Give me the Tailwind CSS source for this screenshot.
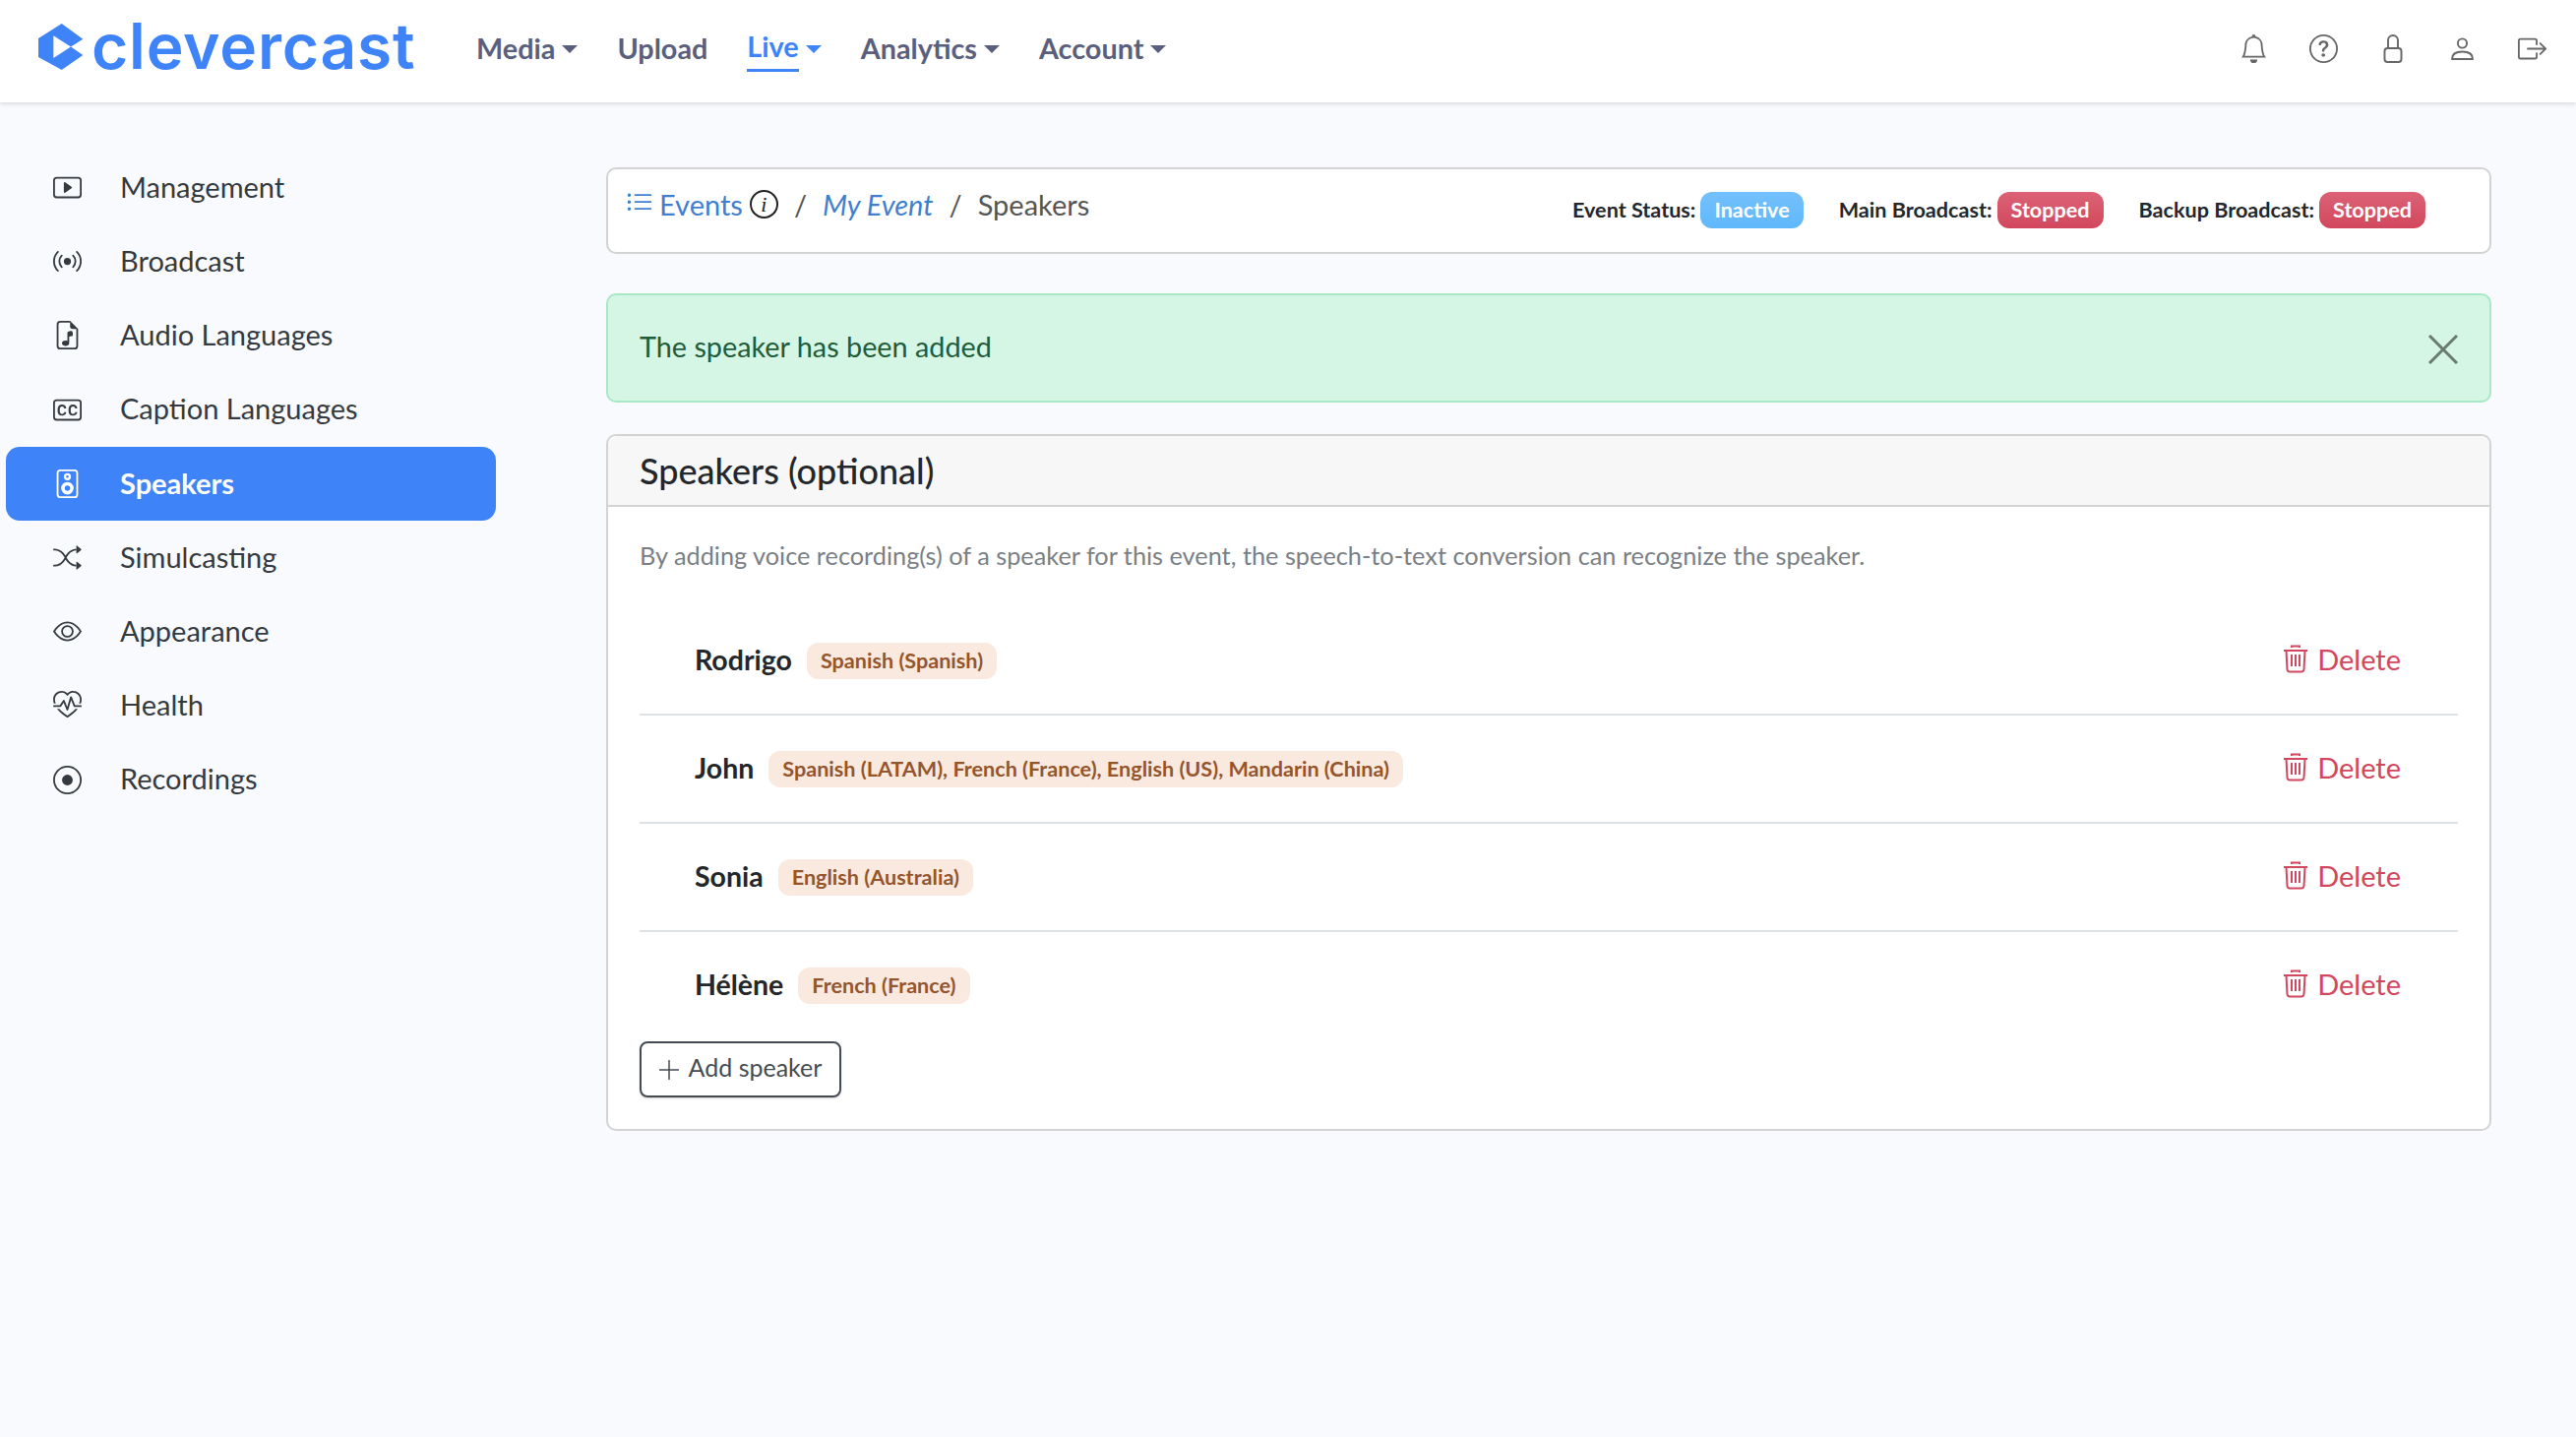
<!DOCTYPE html>
<html lang="en">
<head>
  <meta charset="UTF-8" />
  <title>Speakers</title>
  <script src="https://cdn.jsdelivr.net/npm/@tailwindcss/browser@4"></script>
</head>
<body class="bg-[#f9fafe] text-[#2f3640] min-h-screen font-['Lato',sans-serif]">

  <!-- Top bar -->
  <header class="h-[104px] bg-white shadow-[0_2px_4px_rgba(0,0,0,0.12)] flex items-center relative">
    <a class="flex items-center ml-[39px] w-[399px] -mt-[9px] text-[#3f83f8]">
      <svg class="w-[46px] h-[47px] shrink-0" viewBox="0 0 46 47" fill="#3f83f8"><path d="M23.7 0 L45.3 15.7 L33 23.5 L45.3 32 L23.7 47 L0 34 L0 15 Z"/><path d="M15.3 12.3 L33 23.5 L15.3 35Z" fill="#fff"/></svg>
      <span class="ml-[8px] -mt-[2px] text-[64px] leading-none font-semibold tracking-[0.8px] font-['Inter',sans-serif]">clevercast</span>
    </a>
    <nav class="flex items-center text-[28.8px] font-bold text-[#5a5f7d] ml-[46px] -mt-[5px]">
      <a class="flex items-center mr-[40px]">Media<span class="ml-[7px] w-0 h-0 border-x-[8px] border-x-transparent border-t-[8px] border-t-[#5a5f7d]"></span></a>
      <a class="mr-[40px]">Upload</a>
      <a class="flex items-center mr-[40px] text-[#3f83f8]"><span class="border-b-[3px] border-[#3f83f8]">Live</span><span class="ml-[7px] w-0 h-0 border-x-[8px] border-x-transparent border-t-[8px] border-t-[#3f83f8]"></span></a>
      <a class="flex items-center mr-[40px]">Analytics<span class="ml-[7px] w-0 h-0 border-x-[8px] border-x-transparent border-t-[8px] border-t-[#5a5f7d]"></span></a>
      <a class="flex items-center">Account<span class="ml-[7px] w-0 h-0 border-x-[8px] border-x-transparent border-t-[8px] border-t-[#5a5f7d]"></span></a>
    </nav>
    <div class="ml-auto mr-[30px] -mt-[6px] flex items-center gap-[41.7px] text-[#666]">
      <svg class="w-[29px] h-[29px]" viewBox="0 0 16 16" fill="currentColor"><path d="M8 16a2 2 0 0 0 2-2H6a2 2 0 0 0 2 2zM8 1.918l-.797.161A4.002 4.002 0 0 0 4 6c0 .628-.134 2.197-.459 3.742-.16.767-.376 1.566-.663 2.258h10.244c-.287-.692-.502-1.49-.663-2.258C12.134 8.197 12 6.628 12 6a4.002 4.002 0 0 0-3.203-3.92L8 1.917zM14.22 12c.223.447.481.801.78 1H1c.299-.199.557-.553.78-1C2.68 10.2 3 6.88 3 6c0-2.42 1.72-4.44 4.005-4.901a1 1 0 1 1 1.99 0A5.002 5.002 0 0 1 13 6c0 .88.32 4.2 1.22 6z"/></svg>
      <svg class="w-[29px] h-[29px]" viewBox="0 0 16 16" fill="currentColor"><path d="M8 15A7 7 0 1 1 8 1a7 7 0 0 1 0 14zm0 1A8 8 0 1 0 8 0a8 8 0 0 0 0 16z"/><path d="M5.255 5.786a.237.237 0 0 0 .241.247h.825c.138 0 .248-.113.266-.25.09-.656.54-1.134 1.342-1.134.686 0 1.314.343 1.314 1.168 0 .635-.374.927-.965 1.371-.673.489-1.206 1.06-1.168 1.987l.003.217a.25.25 0 0 0 .25.246h.811a.25.25 0 0 0 .25-.25v-.105c0-.718.273-.927 1.01-1.486.609-.463 1.244-.977 1.244-2.056 0-1.511-1.276-2.241-2.673-2.241-1.267 0-2.655.59-2.75 2.286zm1.557 5.763c0 .533.425.927 1.01.927.609 0 1.028-.394 1.028-.927 0-.552-.42-.94-1.029-.94-.584 0-1.009.388-1.009.94z"/></svg>
      <svg class="w-[29px] h-[29px]" viewBox="0 0 29 29" fill="none" stroke="currentColor" stroke-width="1.9"><rect x="5.5" y="14" width="17" height="14" rx="3"/><path d="M9 14V6a5 5 0 0 1 10 0v8"/></svg>
      <svg class="w-[29px] h-[29px]" viewBox="0 0 29 29" fill="none" stroke="currentColor" stroke-width="1.9"><circle cx="14.5" cy="9" r="4.6"/><path d="M4 25q0-7.5 10.5-7.5T25 25z" stroke-linejoin="round"/></svg>
      <svg class="w-[29px] h-[29px]" viewBox="0 0 16 16" fill="currentColor"><path d="M10 12.5a.5.5 0 0 1-.5.5h-8a.5.5 0 0 1-.5-.5v-9a.5.5 0 0 1 .5-.5h8a.5.5 0 0 1 .5.5v2a.5.5 0 0 0 1 0v-2A1.5 1.5 0 0 0 9.5 2h-8A1.5 1.5 0 0 0 0 3.5v9A1.5 1.5 0 0 0 1.5 14h8a1.5 1.5 0 0 0 1.5-1.5v-2a.5.5 0 0 0-1 0v2z"/><path d="M15.854 8.354a.5.5 0 0 0 0-.708l-3-3a.5.5 0 0 0-.708.708L14.293 7.5H5.5a.5.5 0 0 0 0 1h8.793l-2.147 2.146a.5.5 0 0 0 .708.708l3-3z"/></svg>
    </div>
  </header>

  <div class="flex">
    <!-- Sidebar -->
    <aside class="w-[504px] ml-[6px] pt-[49px] shrink-0 text-[29px] text-[#343a40]">
      <a class="h-[75.2px] flex items-center pl-[48px]">
        <svg class="w-[29px] h-[29px] mr-[39px] shrink-0" viewBox="0 0 16 16" fill="currentColor"><path d="M6.79 5.093A.5.5 0 0 0 6 5.5v5a.5.5 0 0 0 .79.407l3.5-2.5a.5.5 0 0 0 0-.814l-3.5-2.5z"/><path d="M0 4a2 2 0 0 1 2-2h12a2 2 0 0 1 2 2v8a2 2 0 0 1-2 2H2a2 2 0 0 1-2-2V4zm15 0a1 1 0 0 0-1-1H2a1 1 0 0 0-1 1v8a1 1 0 0 0 1 1h12a1 1 0 0 0 1-1V4z"/></svg>
        <span class="-mt-[2px]">Management</span>
      </a>
      <a class="h-[75.2px] flex items-center pl-[48px]">
        <svg class="w-[29px] h-[29px] mr-[39px] shrink-0" viewBox="0 0 16 16" fill="currentColor"><path d="M3.05 3.05a7 7 0 0 0 0 9.9.5.5 0 0 1-.707.707 8 8 0 0 1 0-11.314.5.5 0 0 1 .707.707zm2.122 2.122a4 4 0 0 0 0 5.656.5.5 0 1 1-.708.708 5 5 0 0 1 0-7.072.5.5 0 0 1 .708.708zm5.656-.708a.5.5 0 0 1 .708 0 5 5 0 0 1 0 7.072.5.5 0 1 1-.708-.708 4 4 0 0 0 0-5.656.5.5 0 0 1 0-.708zm2.122-2.12a.5.5 0 0 1 .707 0 8 8 0 0 1 0 11.313.5.5 0 0 1-.707-.707 7 7 0 0 0 0-9.9.5.5 0 0 1 0-.706zM10 8a2 2 0 1 1-4 0 2 2 0 0 1 4 0z"/></svg>
        <span class="-mt-[2px]">Broadcast</span>
      </a>
      <a class="h-[75.2px] flex items-center pl-[48px]">
        <svg class="w-[29px] h-[29px] mr-[39px] shrink-0" viewBox="0 0 16 16" fill="currentColor"><path d="M11 6.64a1 1 0 0 0-1.243-.97l-1 .25A1 1 0 0 0 8 6.89v4.306A2.572 2.572 0 0 0 7 11c-.5 0-.974.134-1.338.377-.36.24-.662.628-.662 1.123s.301.883.662 1.123c.364.243.839.377 1.338.377.5 0 .974-.134 1.338-.377.36-.24.662-.628.662-1.123V8.89l2-.5V6.64z"/><path d="M14 14V4.5L9.5 0H4a2 2 0 0 0-2 2v12a2 2 0 0 0 2 2h8a2 2 0 0 0 2-2zM9.5 3A1.5 1.5 0 0 0 11 4.5h2V14a1 1 0 0 1-1 1H4a1 1 0 0 1-1-1V2a1 1 0 0 1 1-1h5.5v2z"/></svg>
        <span class="-mt-[2px]">Audio Languages</span>
      </a>
      <a class="h-[75.2px] flex items-center pl-[48px]">
        <svg class="w-[29px] h-[29px] mr-[39px] shrink-0" viewBox="0 0 16 16" fill="currentColor"><path d="M3.708 7.755c0-1.111.488-1.753 1.319-1.753.681 0 1.138.47 1.186 1.107H7.36V7c-.052-1.186-1.024-2-2.342-2C3.414 5 2.5 6.05 2.5 7.751v.747c0 1.7.905 2.73 2.518 2.73 1.314 0 2.285-.792 2.342-1.939v-.114H6.213c-.048.615-.496 1.05-1.186 1.05-.84 0-1.319-.62-1.319-1.727v-.743zm6.14 0c0-1.111.488-1.753 1.318-1.753.682 0 1.139.47 1.187 1.107H13.5V7c-.053-1.186-1.024-2-2.342-2C9.554 5 8.64 6.05 8.64 7.751v.747c0 1.7.905 2.73 2.518 2.73 1.314 0 2.285-.792 2.342-1.939v-.114h-1.147c-.048.615-.497 1.05-1.187 1.05-.839 0-1.318-.62-1.318-1.727v-.743z"/><path d="M14 3a1 1 0 0 1 1 1v8a1 1 0 0 1-1 1H2a1 1 0 0 1-1-1V4a1 1 0 0 1 1-1h12zM2 2a2 2 0 0 0-2 2v8a2 2 0 0 0 2 2h12a2 2 0 0 0 2-2V4a2 2 0 0 0-2-2H2z"/></svg>
        <span class="-mt-[2px]">Caption Languages</span>
      </a>
      <a class="h-[75.2px] flex items-center pl-[48px] bg-[#3f83f8] text-white font-bold rounded-[14px] w-[498px]">
        <svg class="w-[29px] h-[29px] mr-[39px] shrink-0" viewBox="0 0 16 16" fill="currentColor"><path d="M12 1a1 1 0 0 1 1 1v12a1 1 0 0 1-1 1H4a1 1 0 0 1-1-1V2a1 1 0 0 1 1-1h8zM4 0a2 2 0 0 0-2 2v12a2 2 0 0 0 2 2h8a2 2 0 0 0 2-2V2a2 2 0 0 0-2-2H4z"/><path d="M8 4.75a.75.75 0 1 1 0-1.5.75.75 0 0 1 0 1.5zM8 6a2 2 0 1 0 0-4 2 2 0 0 0 0 4zm0 3a1.5 1.5 0 1 0 0 3 1.5 1.5 0 0 0 0-3zm-3.5 1.5a3.5 3.5 0 1 1 7 0 3.5 3.5 0 0 1-7 0z"/></svg>
        <span class="-mt-[2px]">Speakers</span>
      </a>
      <a class="h-[75.2px] flex items-center pl-[48px]">
        <svg class="w-[29px] h-[29px] mr-[39px] shrink-0" viewBox="0 0 16 16" fill="currentColor"><path fill-rule="evenodd" d="M0 3.5A.5.5 0 0 1 .5 3H1c2.202 0 3.827 1.24 4.874 2.418.49.552.865 1.102 1.126 1.532.26-.43.636-.98 1.126-1.532C9.173 4.24 10.798 3 13 3v1c-1.798 0-3.173 1.01-4.126 2.082A9.624 9.624 0 0 0 7.556 8a9.624 9.624 0 0 0 1.317 1.918C9.828 10.99 11.204 12 13 12v1c-2.202 0-3.827-1.24-4.874-2.418A10.595 10.595 0 0 1 7 9.05c-.26.43-.636.98-1.126 1.532C4.827 11.76 3.202 13 1 13H.5a.5.5 0 0 1 0-1H1c1.798 0 3.173-1.01 4.126-2.082A9.624 9.624 0 0 0 6.444 8a9.624 9.624 0 0 0-1.317-1.918C4.172 5.01 2.796 4 1 4H.5a.5.5 0 0 1-.5-.5z"/><path d="M13 5.466V1.534a.25.25 0 0 1 .41-.192l2.36 1.966c.12.1.12.284 0 .384l-2.36 1.966a.25.25 0 0 1-.41-.192zm0 9v-3.932a.25.25 0 0 1 .41-.192l2.36 1.966c.12.1.12.284 0 .384l-2.36 1.966a.25.25 0 0 1-.41-.192z"/></svg>
        <span class="-mt-[2px]">Simulcasting</span>
      </a>
      <a class="h-[75.2px] flex items-center pl-[48px]">
        <svg class="w-[29px] h-[29px] mr-[39px] shrink-0" viewBox="0 0 16 16" fill="currentColor"><path d="M16 8s-3-5.5-8-5.5S0 8 0 8s3 5.5 8 5.5S16 8 16 8zM1.173 8a13.133 13.133 0 0 1 1.66-2.043C4.12 4.668 5.88 3.5 8 3.5c2.12 0 3.879 1.168 5.168 2.457A13.133 13.133 0 0 1 14.828 8c-.058.087-.122.183-.195.288-.335.48-.83 1.12-1.465 1.755C11.879 11.332 10.119 12.5 8 12.5c-2.12 0-3.879-1.168-5.168-2.457A13.134 13.134 0 0 1 1.172 8z"/><path d="M8 5.5a2.5 2.5 0 1 0 0 5 2.5 2.5 0 0 0 0-5zM4.5 8a3.5 3.5 0 1 1 7 0 3.5 3.5 0 0 1-7 0z"/></svg>
        <span class="-mt-[2px]">Appearance</span>
      </a>
      <a class="h-[75.2px] flex items-center pl-[48px]">
        <svg class="w-[29px] h-[29px] mr-[39px] shrink-0" viewBox="0 0 16 16" fill="currentColor"><path d="m8 2.748-.717-.737C5.6.281 2.514.878 1.4 3.053.918 3.995.78 5.323 1.508 7H.43c-2.128-5.697 4.165-8.83 7.394-5.857.06.055.119.112.176.171a3.12 3.12 0 0 1 .176-.17c3.23-2.974 9.522.159 7.394 5.856h-1.078c.728-1.677.59-3.005.108-3.947C13.486.878 10.4.28 8.717 2.01L8 2.748ZM2.212 10h1.315C4.593 11.183 6.05 12.458 8 13.795c1.949-1.337 3.407-2.612 4.473-3.795h1.315c-1.265 1.566-3.14 3.25-5.788 5-2.648-1.75-4.523-3.434-5.788-5Z"/><path d="M10.464 3.314a.5.5 0 0 0-.945.049L7.921 8.956 6.464 5.314a.5.5 0 0 0-.88-.091L3.732 8H.5a.5.5 0 0 0 0 1H4a.5.5 0 0 0 .416-.223l1.473-2.209 1.647 4.118a.5.5 0 0 0 .945-.049l1.598-5.593 1.457 3.642A.5.5 0 0 0 12 9h3.5a.5.5 0 0 0 0-1h-3.162l-1.874-4.686Z"/></svg>
        <span class="-mt-[2px]">Health</span>
      </a>
      <a class="h-[75.2px] flex items-center pl-[48px]">
        <svg class="w-[29px] h-[29px] mr-[39px] shrink-0" viewBox="0 0 16 16" fill="currentColor"><path d="M8 15A7 7 0 1 1 8 1a7 7 0 0 1 0 14zm0 1A8 8 0 1 0 8 0a8 8 0 0 0 0 16z"/><path d="M11 8a3 3 0 1 1-6 0 3 3 0 0 1 6 0z"/></svg>
        <span class="-mt-[2px]">Recordings</span>
      </a>
    </aside>

    <!-- Main -->
    <main class="ml-[106px] w-[1916px] pt-[66px]">
      <!-- Breadcrumb + status -->
      <div class="h-[88px] bg-white border-2 border-[#d3d3d3] rounded-[10px] flex items-start relative">
        <div class="flex items-center pl-[18px] pt-[14px] text-[29px]">
          <svg class="w-[28px] h-[28px] mr-[6px] -mt-[3px] text-[#3f7fcf]" viewBox="0 0 16 16" fill="currentColor"><path fill-rule="evenodd" d="M5 11.5a.5.5 0 0 1 .5-.5h9a.5.5 0 0 1 0 1h-9a.5.5 0 0 1-.5-.5zm0-4a.5.5 0 0 1 .5-.5h9a.5.5 0 0 1 0 1h-9a.5.5 0 0 1-.5-.5zm0-4a.5.5 0 0 1 .5-.5h9a.5.5 0 0 1 0 1h-9a.5.5 0 0 1-.5-.5zm-3 1a1 1 0 1 0 0-2 1 1 0 0 0 0 2zm0 4a1 1 0 1 0 0-2 1 1 0 0 0 0 2zm0 4a1 1 0 1 0 0-2 1 1 0 0 0 0 2z"/></svg>
          <a class="text-[#3f7fcf]">Events</a>
          <span class="ml-[7px] w-[29px] h-[29px] rounded-full border-2 border-[#222] flex items-center justify-center text-[22px] italic font-['Liberation_Serif',serif] text-[#222]">i</span>
          <span class="mx-[16px] text-[#555]">/</span>
          <a class="italic text-[#3f7fcf]">My Event</a>
          <span class="mx-[16px] text-[#555]">/</span>
          <span class="text-[#555]">Speakers</span>
        </div>
        <div class="absolute left-[980px] top-[23px] flex items-center text-[21.6px] font-bold text-[#23272b]">
          <span>Event Status:</span>
          <span class="ml-[5px] h-[37px] px-[14px] flex items-center rounded-[12px] text-white bg-gradient-to-b from-[#74c0fc] to-[#5fb8fb]">Inactive</span>
          <span class="ml-[36px]">Main Broadcast:</span>
          <span class="ml-[5px] h-[37px] px-[14px] flex items-center rounded-[12px] text-white bg-gradient-to-b from-[#dc6276] to-[#d1475d]">Stopped</span>
          <span class="ml-[36px]">Backup Broadcast:</span>
          <span class="ml-[5px] h-[37px] px-[14px] flex items-center rounded-[12px] text-white bg-gradient-to-b from-[#dc6276] to-[#d1475d]">Stopped</span>
        </div>
      </div>

      <!-- Alert -->
      <div class="mt-[40px] h-[111px] bg-[#d5f5e5] border-2 border-[#a9e8c6] rounded-[10px] flex items-center justify-between pl-[32px] pr-[32px] text-[28.8px] text-[#1f5c38]">
        <span class="-mt-[2px]">The speaker has been added</span>
        <svg class="w-[30px] h-[30px] mt-[2px] text-[#6a7a70]" viewBox="0 0 30 30" fill="none" stroke="currentColor" stroke-width="3"><path d="M1 1l28 28M29 1L1 29"/></svg>
      </div>

      <!-- Speakers card -->
      <section class="mt-[32px] bg-white border-2 border-[#d3d3d3] rounded-[10px]">
        <div class="h-[72px] bg-[#f7f7f7] border-b-2 border-[#d3d3d3] rounded-t-[10px] flex items-center pl-[32px] text-[36px] font-medium text-[#23272b]">Speakers (optional)</div>
        <div class="px-[32px] pt-[31px] pb-[32px]">
          <p class="text-[25.3px] leading-[36px] text-[#7a7f85]">By adding voice recording(s) of a speaker for this event, the speech-to-text conversion can recognize the speaker.</p>
          <ul class="mt-[35px]">
            <li class="h-[110px] pb-[2px] border-b-2 border-[#dee2e6] flex items-center pl-[56px] pr-[58px]">
              <span class="text-[28.5px] font-bold text-[#23272b]">Rodrigo</span>
              <span class="ml-[15px] mt-[3px] h-[37px] px-[14px] flex items-center rounded-[12px] bg-[#f9e9de] text-[#94552c] text-[21.6px] font-bold">Spanish (Spanish)</span>
              <a class="ml-auto flex items-center text-[#d1475d] text-[29px]">
                <svg class="w-[28px] h-[30px] mr-[8px] -mt-[2px]" viewBox="0 0 28 30" fill="none" stroke="currentColor" stroke-width="2"><path d="M2 7h24M4.5 7l1 19a2.5 2.5 0 0 0 2.5 2.5h12a2.5 2.5 0 0 0 2.5-2.5l1-19M10 4V2.5h8V4M10 11v12M14 11v12M18 11v12"/></svg>
                Delete
              </a>
            </li>
            <li class="h-[110px] pb-[2px] border-b-2 border-[#dee2e6] flex items-center pl-[56px] pr-[58px]">
              <span class="text-[28.5px] font-bold text-[#23272b]">John</span>
              <span class="ml-[15px] mt-[3px] h-[37px] px-[14px] flex items-center rounded-[12px] bg-[#f9e9de] text-[#94552c] text-[21.6px] font-bold">Spanish (LATAM), French (France), English (US), Mandarin (China)</span>
              <a class="ml-auto flex items-center text-[#d1475d] text-[29px]">
                <svg class="w-[28px] h-[30px] mr-[8px] -mt-[2px]" viewBox="0 0 28 30" fill="none" stroke="currentColor" stroke-width="2"><path d="M2 7h24M4.5 7l1 19a2.5 2.5 0 0 0 2.5 2.5h12a2.5 2.5 0 0 0 2.5-2.5l1-19M10 4V2.5h8V4M10 11v12M14 11v12M18 11v12"/></svg>
                Delete
              </a>
            </li>
            <li class="h-[110px] pb-[2px] border-b-2 border-[#dee2e6] flex items-center pl-[56px] pr-[58px]">
              <span class="text-[28.5px] font-bold text-[#23272b]">Sonia</span>
              <span class="ml-[15px] mt-[3px] h-[37px] px-[14px] flex items-center rounded-[12px] bg-[#f9e9de] text-[#94552c] text-[21.6px] font-bold">English (Australia)</span>
              <a class="ml-auto flex items-center text-[#d1475d] text-[29px]">
                <svg class="w-[28px] h-[30px] mr-[8px] -mt-[2px]" viewBox="0 0 28 30" fill="none" stroke="currentColor" stroke-width="2"><path d="M2 7h24M4.5 7l1 19a2.5 2.5 0 0 0 2.5 2.5h12a2.5 2.5 0 0 0 2.5-2.5l1-19M10 4V2.5h8V4M10 11v12M14 11v12M18 11v12"/></svg>
                Delete
              </a>
            </li>
            <li class="h-[110px] pb-[4px] flex items-center pl-[56px] pr-[58px]">
              <span class="text-[28.5px] font-bold text-[#23272b]">Hélène</span>
              <span class="ml-[15px] mt-[3px] h-[37px] px-[14px] flex items-center rounded-[12px] bg-[#f9e9de] text-[#94552c] text-[21.6px] font-bold">French (France)</span>
              <a class="ml-auto flex items-center text-[#d1475d] text-[29px]">
                <svg class="w-[28px] h-[30px] mr-[8px] -mt-[2px]" viewBox="0 0 28 30" fill="none" stroke="currentColor" stroke-width="2"><path d="M2 7h24M4.5 7l1 19a2.5 2.5 0 0 0 2.5 2.5h12a2.5 2.5 0 0 0 2.5-2.5l1-19M10 4V2.5h8V4M10 11v12M14 11v12M18 11v12"/></svg>
                Delete
              </a>
            </li>
          </ul>
          <button class="mt-[1px] h-[57px] w-[205px] border-2 border-[#454b52] rounded-[8px] shadow-[0_1px_2px_rgba(0,0,0,0.2)] flex items-center justify-center text-[25px] text-[#454b52]">
            <svg class="w-[20px] h-[20px] mr-[10px]" viewBox="0 0 20 20" stroke="currentColor" stroke-width="1.5" fill="none"><path d="M10 0v20M0 10h20"/></svg>
            <span class="-mt-[3px]">Add speaker</span>
          </button>
        </div>
      </section>
    </main>
  </div>
</body>
</html>
